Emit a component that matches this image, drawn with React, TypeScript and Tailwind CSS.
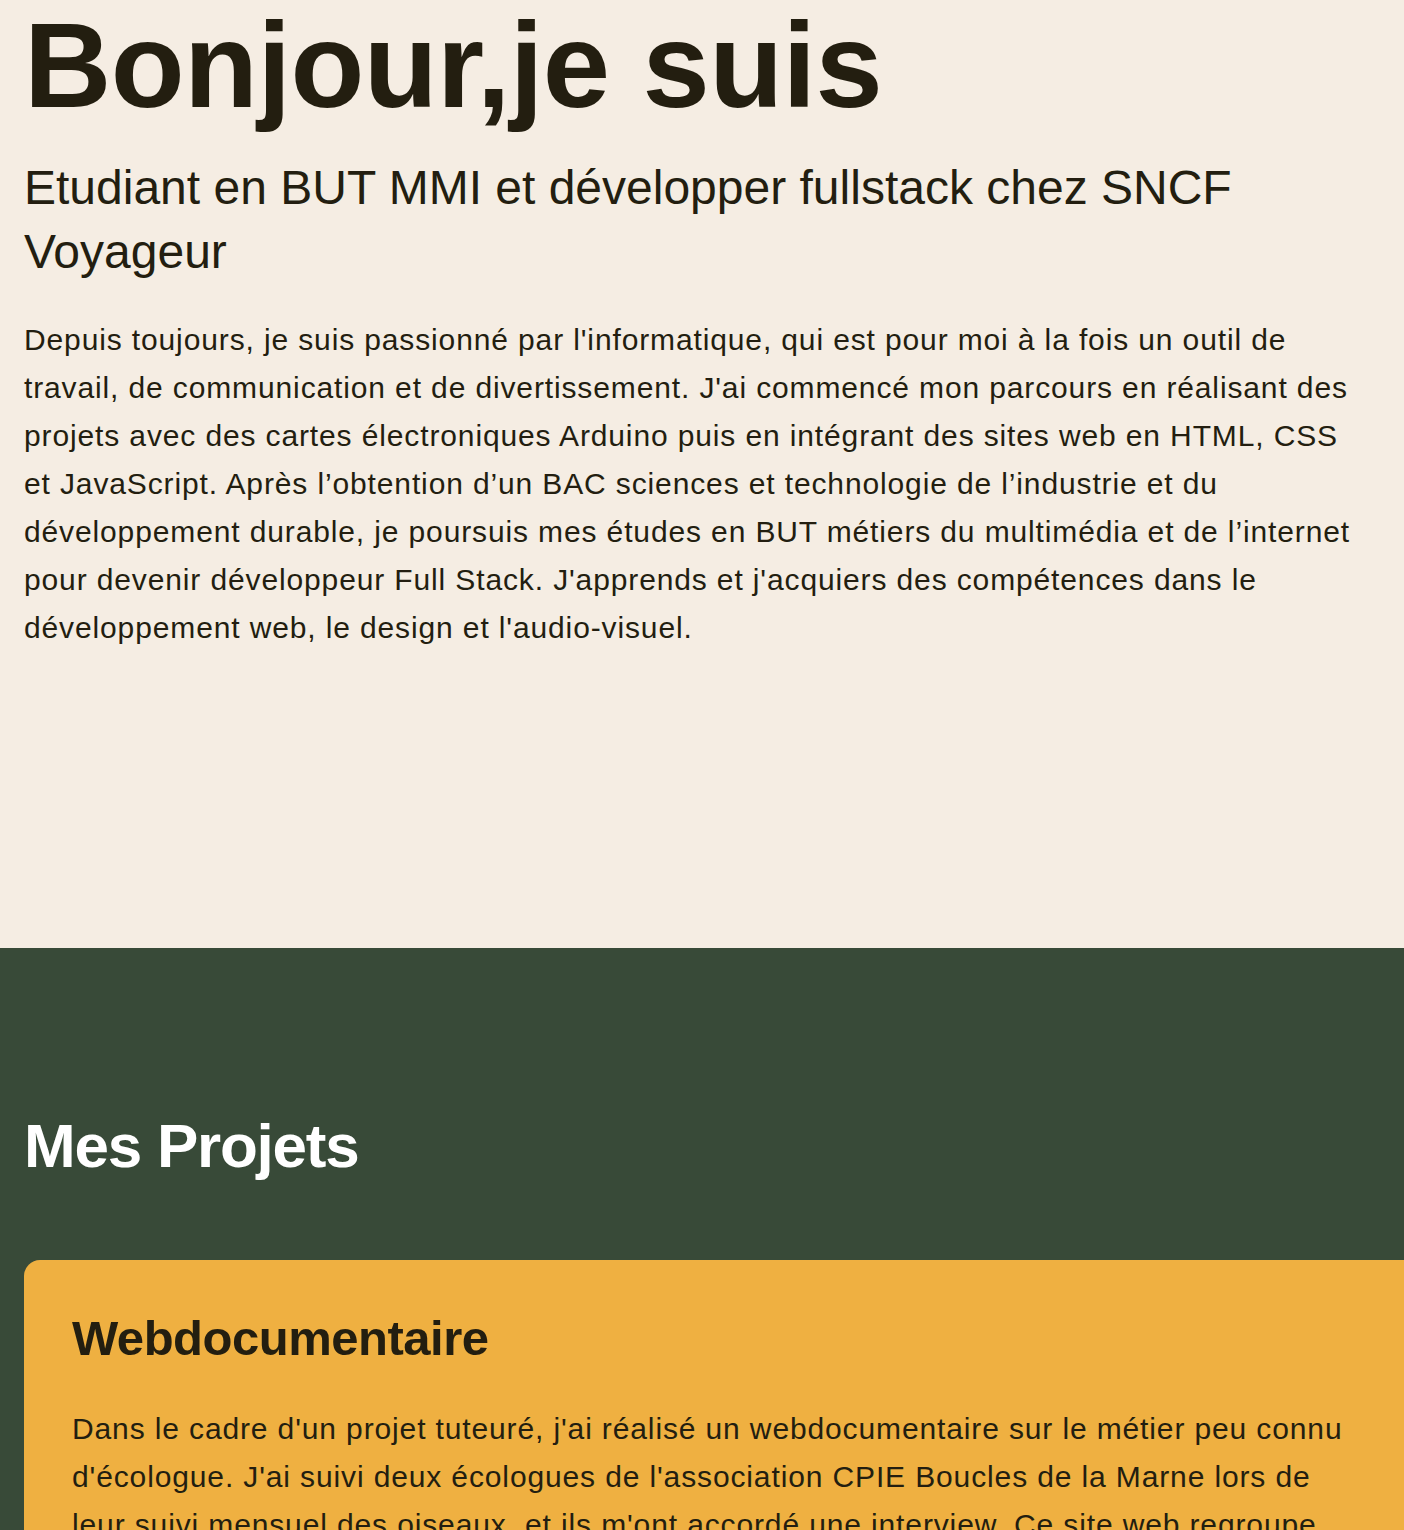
const paraClass =
  "text-[30px] leading-[48px] tracking-[0.029em] text-[#231e10]";

export default function App() {
  return (
    <div className="w-[1404px] overflow-hidden bg-[#f5ede3] font-['Liberation_Sans',Helvetica,Arial,sans-serif]">
      <section className="px-6 pb-[296px] pt-[5px] text-[#231e10]">
        <h1 className="text-[121px] font-bold leading-none tracking-[-0.005em]">
          Bonjour,je suis
        </h1>
        <h2 className="mt-[30px] text-[48px] leading-[64px]">
          Etudiant en BUT MMI et développer fullstack chez SNCF Voyageur
        </h2>
        <p className={`mt-[32px] max-w-[1336px] ${paraClass}`}>
          Depuis toujours, je suis passionné par l'informatique, qui est pour moi à la fois un outil de
          travail, de communication et de divertissement. J'ai commencé mon parcours en réalisant des
          projets avec des cartes électroniques Arduino puis en intégrant des sites web en HTML, CSS et
          JavaScript. Après l’obtention d’un BAC sciences et technologie de l’industrie et du
          développement durable, je poursuis mes études en BUT métiers du multimédia et de l’internet
          pour devenir développeur Full Stack. J'apprends et j'acquiers des compétences dans le
          développement web, le design et l'audio-visuel.
        </p>
      </section>

      <section className="bg-[#384a38] px-6 pt-[167px] pb-24">
        <h2 className="text-[62px] font-bold leading-none tracking-[-0.02em] text-white">
          Mes Projets
        </h2>
        <div className="mt-[83px] w-[1440px] rounded-2xl bg-[#efb041] px-12 pt-[54px] pb-12">
          <h3 className="text-[49px] font-bold leading-none tracking-[-0.01em] text-[#231e10]">
            Webdocumentaire
          </h3>
          <p className={`mt-[42px] max-w-[1288px] ${paraClass}`}>
            Dans le cadre d'un projet tuteuré, j'ai réalisé un webdocumentaire sur le métier peu connu
            d'écologue. J'ai suivi deux écologues de l'association CPIE Boucles de la Marne lors de
            leur suivi mensuel des oiseaux, et ils m'ont accordé une interview. Ce site web regroupe
            des vidéos, des photos et des textes pour faire découvrir ce métier au grand public.
          </p>
        </div>
      </section>
    </div>
  );
}
